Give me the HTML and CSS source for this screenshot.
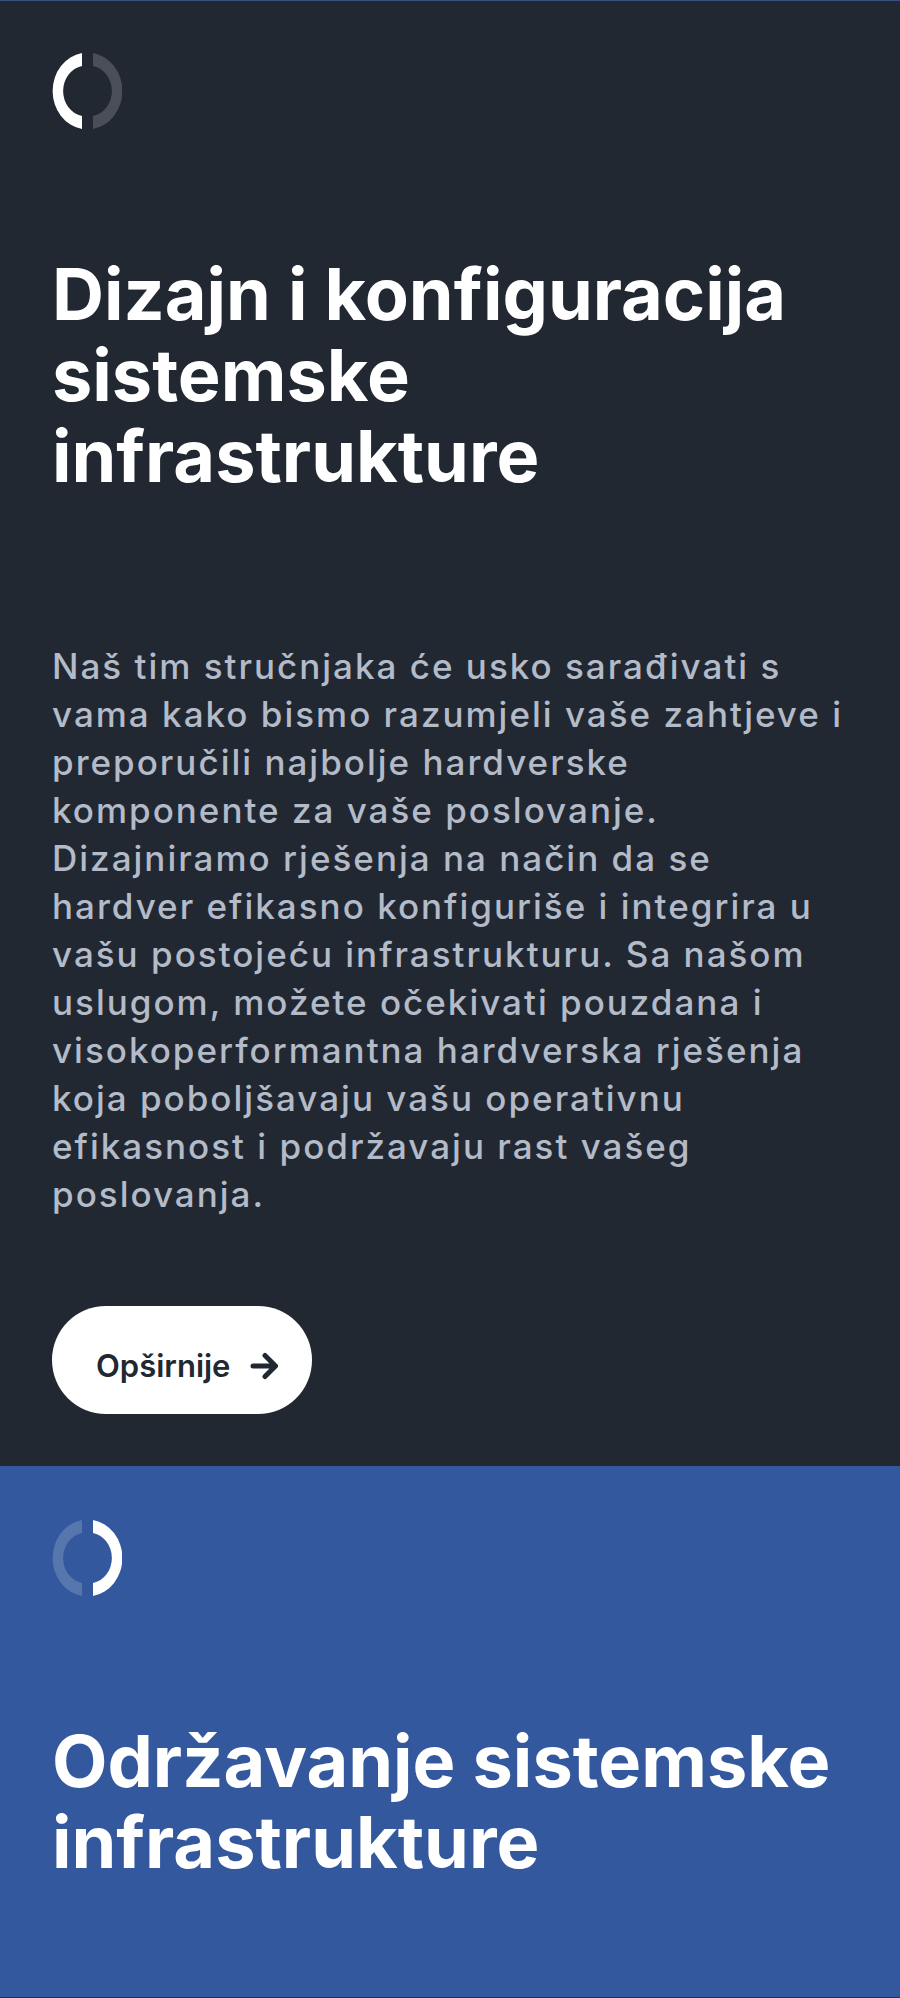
FILE: index.html
```html
<!DOCTYPE html>
<html lang="bs">
<head>
    <meta charset="UTF-8">
    <meta name="viewport" content="width=device-width, initial-scale=1.0">
    <title>Usluge</title>
    <link rel="stylesheet" href="styles.css">
</head>
<body>
    <main class="services">
        <section class="service service-dark">
            <svg class="service-icon" viewBox="0 0 70 76" aria-hidden="true">
                <path d="M30 0A35 38.5 0 0 0 30 76V63A23.5 25.5 0 0 1 30 13Z" fill="#fff"/>
                <path d="M41 0A35 38.5 0 0 1 41 76V63A23.5 25.5 0 0 0 41 13Z" fill="#fff" fill-opacity="0.18"/>
            </svg>
            <h2 class="service-title">Dizajn i konfiguracija sistemske infrastrukture</h2>
            <p class="service-text">Naš tim stručnjaka će usko sarađivati s vama kako bismo razumjeli vaše zahtjeve i preporučili najbolje hardverske komponente za vaše poslovanje. Dizajniramo rješenja na način da se hardver efikasno konfiguriše i integrira u vašu postojeću infrastrukturu. Sa našom uslugom, možete očekivati pouzdana i visokoperformantna hardverska rješenja koja poboljšavaju vašu operativnu efikasnost i podržavaju rast vašeg poslovanja.</p>
            <a class="btn" href="#">
                Opširnije
                <svg class="btn-icon" viewBox="0 0 28 28" aria-hidden="true">
                    <path d="M3 14H24M15 3.5L25.5 14L15 24.5"/>
                </svg>
            </a>
        </section>
        <section class="service service-blue">
            <svg class="service-icon" viewBox="0 0 70 76" aria-hidden="true">
                <path d="M30 0A35 38.5 0 0 0 30 76V63A23.5 25.5 0 0 1 30 13Z" fill="#fff" fill-opacity="0.18"/>
                <path d="M41 0A35 38.5 0 0 1 41 76V63A23.5 25.5 0 0 0 41 13Z" fill="#fff"/>
            </svg>
            <h2 class="service-title">Održavanje sistemske infrastrukture</h2>
        </section>
    </main>
</body>
</html>
```

FILE: styles.css
```css
:root {
    --dark-color: #212832;
    --blue-color: #33589d;
    --text-color: #b3bac8;
}

* {
    box-sizing: border-box;
    margin: 0;
    padding: 0;
}

body {
    font-family: Inter, "Liberation Sans", sans-serif;
    background-color: var(--dark-color);
}

.services {
    display: flex;
    flex-direction: column;
    min-height: 100vh;
    border-top: 1px solid #3a5183;
    border-bottom: 1px solid #1f2f55;
}

.service {
    display: flex;
    flex-direction: column;
    align-items: flex-start;
    padding: 52px 40px 52px 52px;
}

.service-dark {
    background-color: var(--dark-color);
}

.service-blue {
    flex: 1;
    padding-top: 54px;
    background-color: var(--blue-color);
}

.service-icon {
    width: 70px;
    height: 76px;
    margin-bottom: 124px;
}

.service-title {
    color: white;
    font-size: 72px;
    font-weight: 700;
    line-height: 81px;
}

.service-text {
    margin: 146px 0 88px;
    color: var(--text-color);
    font-size: 35px;
    font-weight: 500;
    letter-spacing: 2px;
    line-height: 48px;
}

.btn {
    display: flex;
    align-items: center;
    gap: 20px;
    padding: 40px 34px 28px 44px;
    border-radius: 54px;
    background-color: white;
    color: var(--dark-color);
    font-size: 31px;
    font-weight: 600;
    line-height: 40px;
    text-decoration: none;
}

.btn-icon {
    width: 28px;
    height: 28px;
    fill: none;
    stroke: currentColor;
    stroke-width: 5;
    stroke-linecap: round;
    stroke-linejoin: round;
}
```
